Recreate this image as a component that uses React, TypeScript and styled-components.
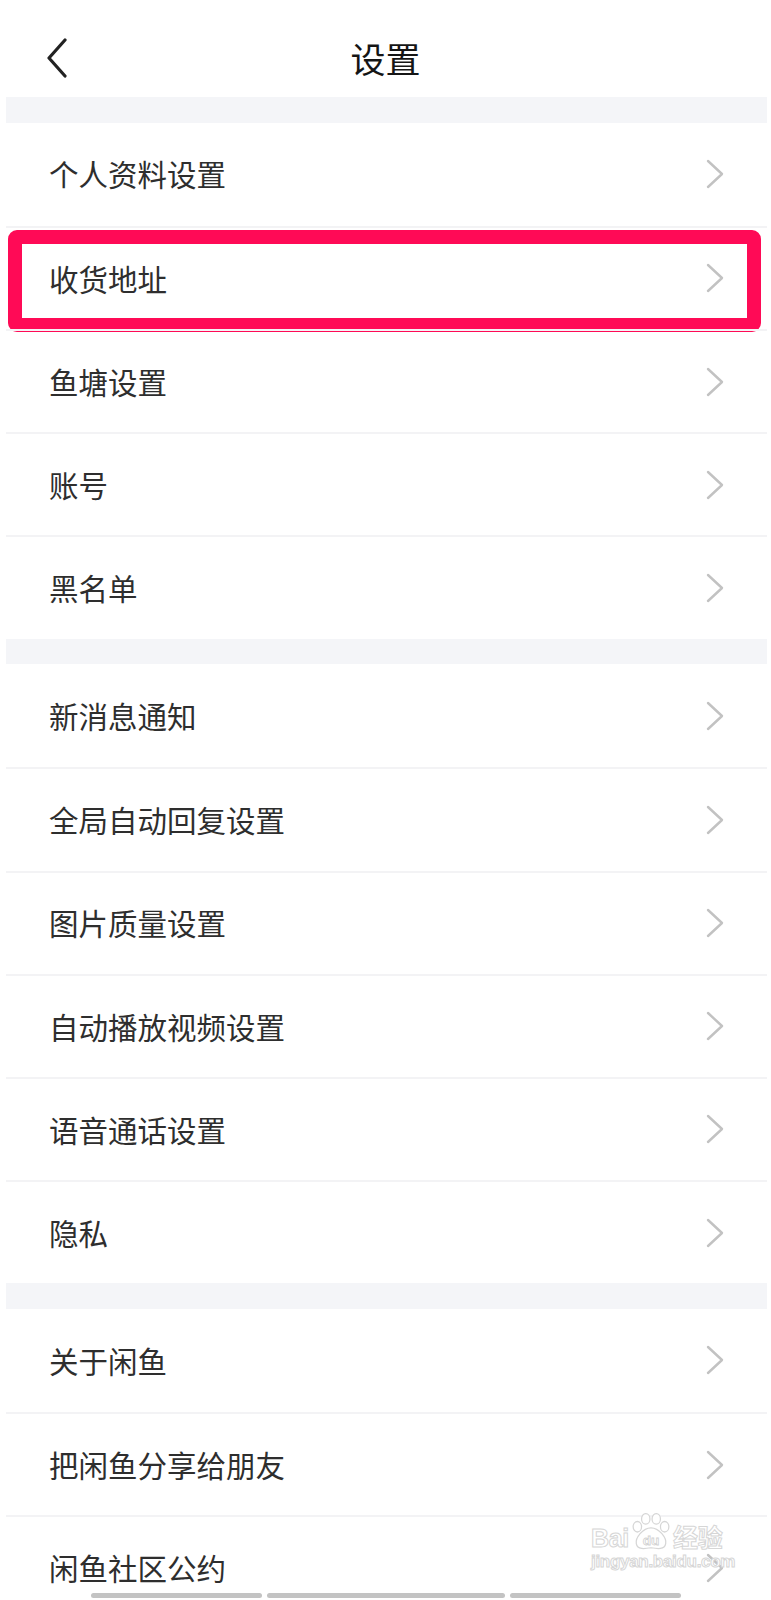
import React from "react";
import styled, { createGlobalStyle } from "styled-components";

const GlobalStyle = createGlobalStyle`
  body {
    margin: 0;
    background: #fff;
    font-family: "Noto Sans CJK SC", "Noto Sans", sans-serif;
  }
`;

const sections: string[][] = [
  ["个人资料设置", "收货地址", "鱼塘设置", "账号", "黑名单"],
  ["新消息通知", "全局自动回复设置", "图片质量设置", "自动播放视频设置", "语音通话设置", "隐私"],
  ["关于闲鱼", "把闲鱼分享给朋友", "闲鱼社区公约"],
];

export default function App() {
  return (
    <>
      <GlobalStyle />
      <Page>
        <Header>
          <BackButton aria-label="返回">
            <svg width="22" height="40" viewBox="0 0 22 40">
              <polyline points="19,2 3,20 19,38" fill="none" stroke="#222" strokeWidth="3.2" strokeLinecap="round" strokeLinejoin="round" />
            </svg>
          </BackButton>
          <Title>设置</Title>
          <span />
        </Header>

        <Sheet>
          {sections.map((rows, i) => (
            <Section key={i}>
              <Band />
              {rows.map((label) => (
                <Row key={label}>
                  <Label>{label}</Label>
                  <Chevron />
                  {label === "收货地址" && <Highlight />}
                </Row>
              ))}
            </Section>
          ))}
        </Sheet>

        <Watermark>
          <LogoLine>
            <Outlined $size={25}>Bai</Outlined>
            <Paw />
            <Outlined $size={25}>经验</Outlined>
          </LogoLine>
          <Outlined $size={17}>jingyan.baidu.com</Outlined>
        </Watermark>

        <ScrollTrack>
          <ScrollBar $w={171} />
          <ScrollBar $w={238} />
          <ScrollBar $w={171} />
        </ScrollTrack>
      </Page>
    </>
  );
}

function Chevron() {
  return (
    <svg width="18" height="30" viewBox="0 0 18 30">
      <polyline points="2,2 16,15 2,28" fill="none" stroke="#c2c2c2" strokeWidth="2.4" strokeLinecap="round" strokeLinejoin="round" />
    </svg>
  );
}

function Paw() {
  // baidu paw, hollow strokes with "du" in the palm
  return (
    <svg width="42" height="38" viewBox="0 0 40 36">
      <g fill="#fff" stroke="#d6d6d6" strokeWidth="1.2">
        <ellipse cx="7" cy="13" rx="4" ry="5" />
        <ellipse cx="15" cy="5.5" rx="4" ry="5" />
        <ellipse cx="25" cy="5.5" rx="4" ry="5" />
        <ellipse cx="33" cy="13" rx="4" ry="5" />
        <path d="M20 14 C 12 14, 5 24, 6 29 C 7 35, 14 34, 20 33 C 26 34, 33 35, 34 29 C 35 24, 28 14, 20 14 Z" />
      </g>
      <text x="20" y="30" textAnchor="middle" fontFamily="Liberation Sans, sans-serif" fontWeight="700" fontSize="13" fill="#fff" stroke="#d2d2d2" strokeWidth="0.8">
        du
      </text>
    </svg>
  );
}

const Page = styled.div`
  position: relative;
  width: 771px;
  height: 1600px;
  overflow: hidden;
  background: #fff;
`;

const Header = styled.header`
  height: 97px;
  box-sizing: border-box;
  padding-top: 18px;
  display: grid;
  grid-template-columns: 1fr auto 1fr;
  align-items: center;
`;

const BackButton = styled.button`
  justify-self: start;
  margin-left: 46px;
  padding: 0;
  border: 0;
  background: none;
  display: flex;
`;

const Title = styled.h1`
  margin: 0;
  font-size: 35px;
  font-weight: 400;
  color: #151515;
  line-height: 1;
`;

const Sheet = styled.main`
  margin: 0 4px 0 6px;
`;

const Section = styled.section`
  display: flex;
  flex-direction: column;
`;

const Band = styled.div`
  height: 25.6px;
  background: #f4f5f8;
`;

const Row = styled.div`
  position: relative;
  height: 103.2px;
  box-sizing: border-box;
  display: flex;
  align-items: center;
  justify-content: space-between;
  padding: 0 43px;
  & + & {
    border-top: 2px solid #f3f3f5;
  }
`;

const Label = styled.span`
  font-size: 29.5px;
  color: #2e2e2e;
  line-height: 1;
`;

const Highlight = styled.div`
  position: absolute;
  top: 2px;
  bottom: -3px;
  left: 2px;
  right: 6px;
  border: 14px solid #ff0a56;
  border-radius: 9px;
  pointer-events: none;
`;

const Watermark = styled.div`
  position: absolute;
  left: 591px;
  top: 1513px;
  display: flex;
  flex-direction: column;
  align-items: flex-start;
  gap: 2px;
`;

const LogoLine = styled.div`
  display: flex;
  align-items: flex-end;
  gap: 1px;
`;

const Outlined = styled.span<{ $size: number }>`
  font-family: "Liberation Sans", "Noto Sans CJK SC", sans-serif;
  font-size: ${(p) => p.$size}px;
  font-weight: 700;
  line-height: 1;
  color: #fff;
  -webkit-text-stroke: 1px #d6d6d6;
  letter-spacing: -0.3px;
`;

const ScrollTrack = styled.div`
  position: absolute;
  left: 91px;
  top: 1593px;
  display: flex;
  gap: 5px;
`;

const ScrollBar = styled.div<{ $w: number }>`
  width: ${(p) => p.$w}px;
  height: 5px;
  border-radius: 3px;
  background: #c3c3c3;
`;
